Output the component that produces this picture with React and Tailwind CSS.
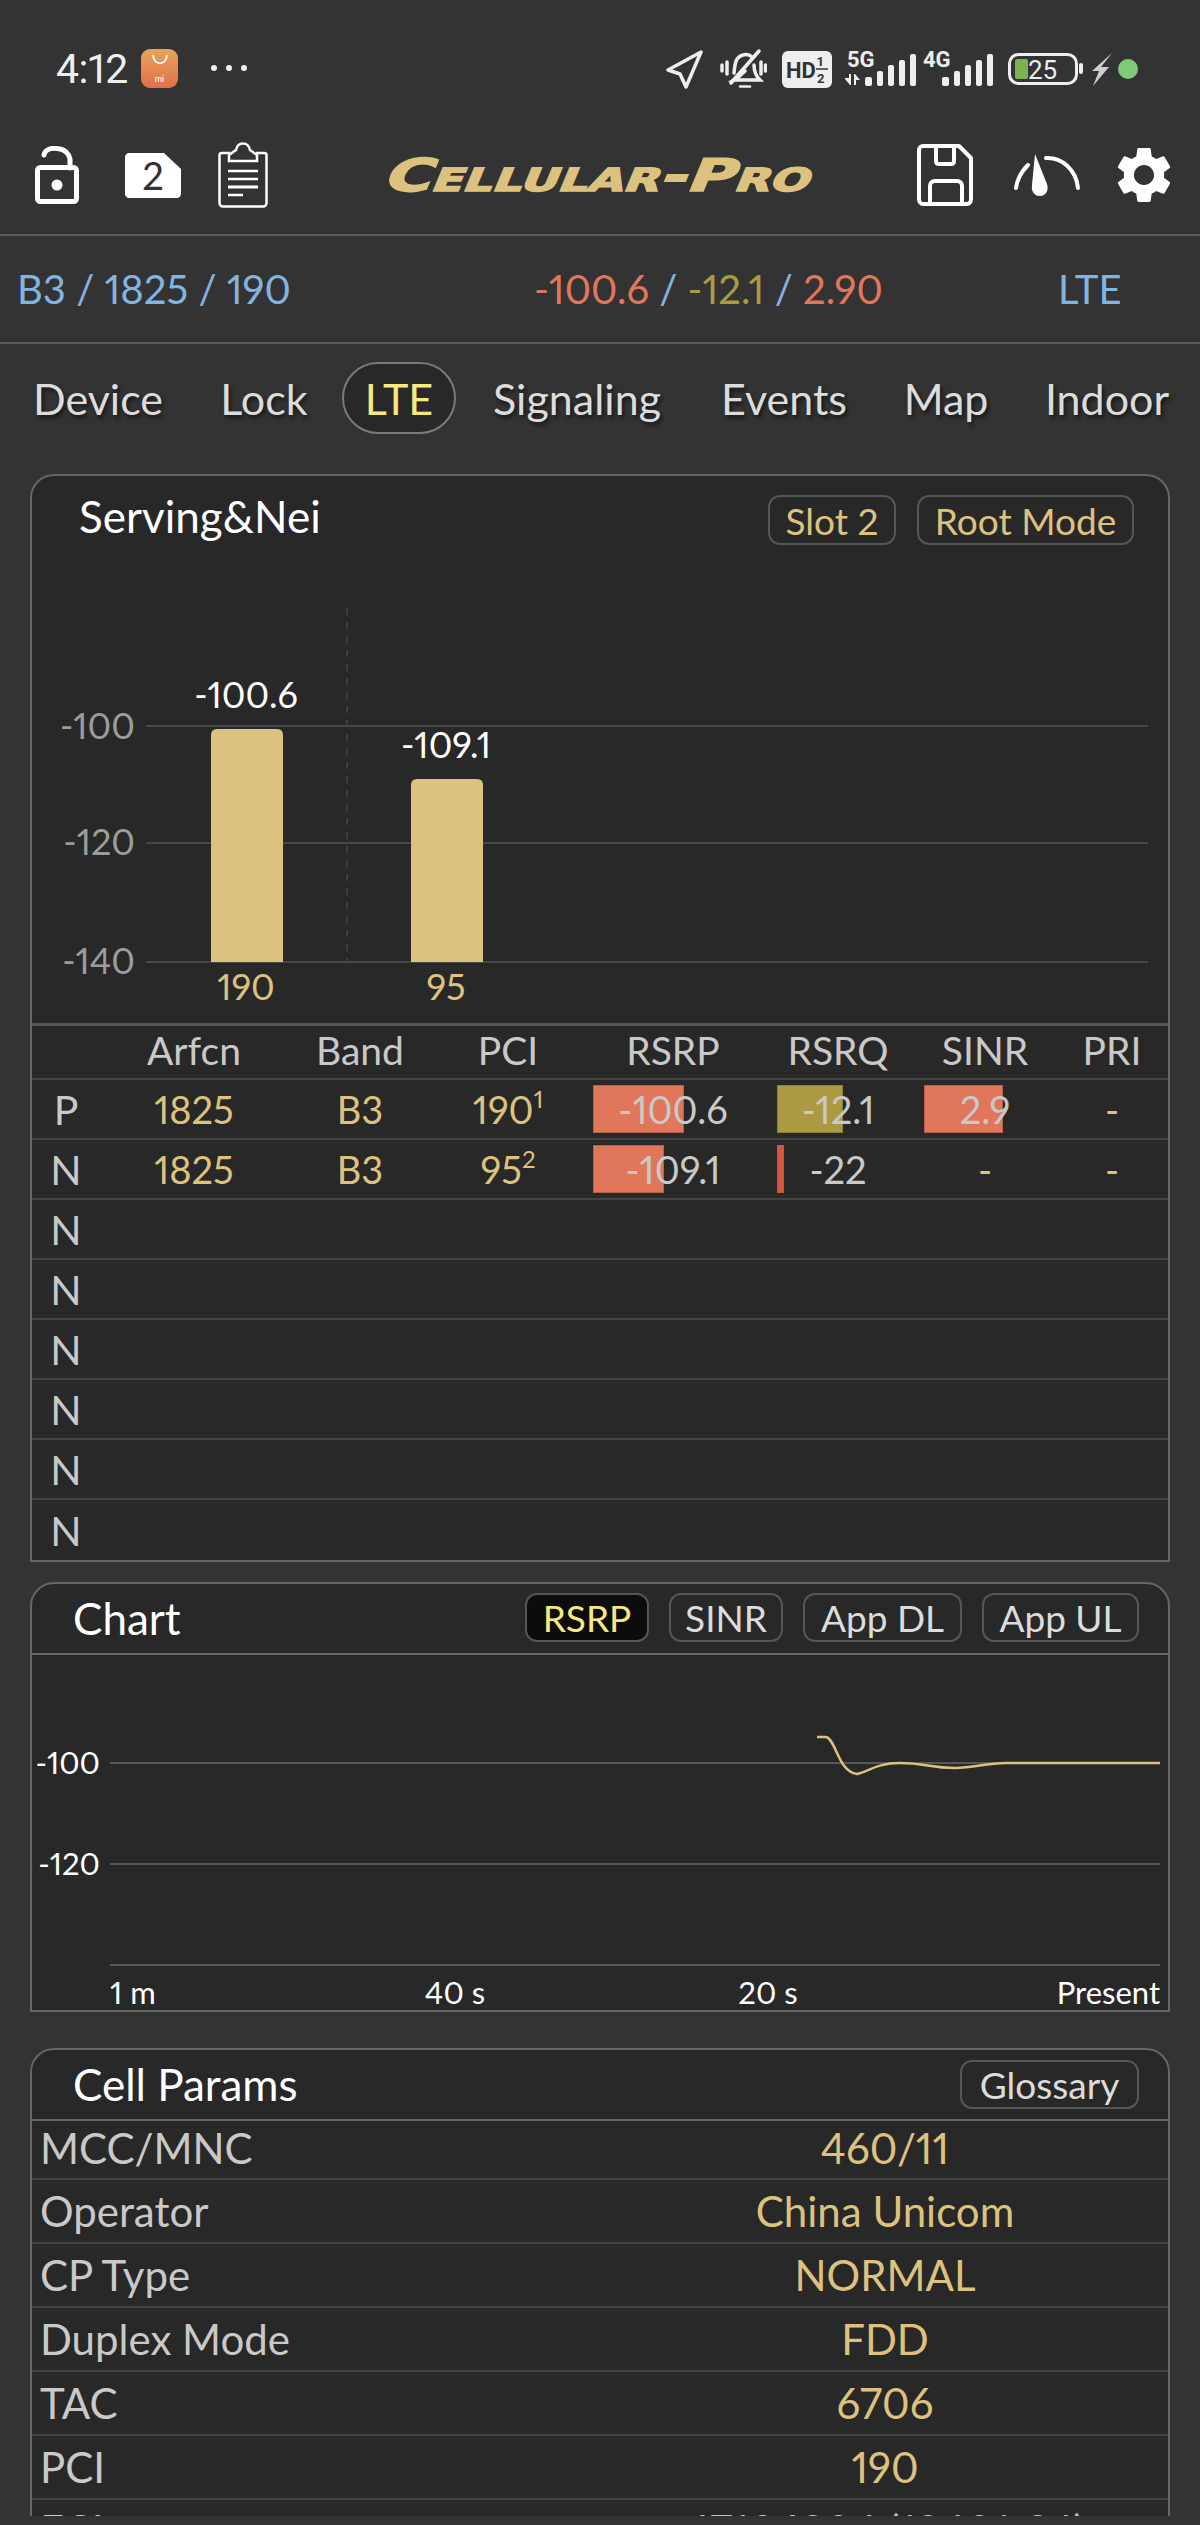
import React from "react";

const GOLD = "#ddc27f";

const NavArrow = () => (
  <svg width="38" height="40" viewBox="0 0 38 40" fill="none" stroke="#eeeeee" strokeWidth="3.5" strokeLinejoin="round">
    <path d="M36 3 L3 21 L15 25 L21 38 Z" />
  </svg>
);

const MutedBell = () => (
  <svg width="47" height="40" viewBox="0 0 47 40" fill="none" stroke="#eeeeee" strokeWidth="3.5" strokeLinecap="round">
    <path d="M14 24 C15 16 15 8 23 6 C27 5 30 6 32 8" />
    <path d="M34 16 C34 23 36 27 40 31 L14 31 C19 28 22 25 25 22" />
    <path d="M39 2 L11 34" />
    <path d="M2 16 V22 M7 13 V25 M41 13 V25 M45.500 16 V22" />
    <path d="M20 37.500 H30" strokeWidth="2.500" />
  </svg>
);

const HdChip = () => (
  <svg width="50" height="37" viewBox="0 0 50 37" className="overflow-visible">
    <rect x="0" y="0" width="50" height="37" rx="6" fill="#eeeeee" />
    <text x="4" y="27" fontSize="22" fontWeight="700" fill="#333333" fontFamily="Roboto, sans-serif">HD</text>
    <text x="35" y="15" fontSize="13" fontWeight="700" fill="#333333" fontFamily="Roboto, sans-serif">1</text>
    <path d="M34 18 H46" stroke="#333333" strokeWidth="1.500" />
    <text x="35" y="32" fontSize="13" fontWeight="700" fill="#333333" fontFamily="Roboto, sans-serif">2</text>
  </svg>
);

const Signal = ({ label, arrows }) => (
  <svg width={arrows ? 72 : 69} height="36" viewBox={arrows ? "0 0 72 36" : "0 0 69 36"} fill="#eeeeee" className="overflow-visible">
    <text x={arrows ? 2 : 0} y="16" fontSize="22" fontWeight="700" fontFamily="Roboto, sans-serif">{label}</text>
    {arrows && <path d="M0 27 H4 V23 H6 V34 H5 L0 28 Z M9 23 H10 L15 29 H11 V34 H9 Z" />}
    <g transform={arrows ? "translate(20 0)" : "translate(19 0)"}>
      <rect x="0" y="26" width="7" height="9" rx="2" />
      <rect x="12" y="20" width="6" height="15" rx="2" />
      <rect x="23" y="14" width="6" height="21" rx="2" />
      <rect x="34" y="9" width="6" height="26" rx="2" />
      <rect x="45" y="3" width="6" height="32" rx="2" />
    </g>
  </svg>
);

const Battery = () => (
  <svg width="75" height="32" viewBox="0 0 75 32" className="overflow-visible">
    <rect x="1.500" y="1.500" width="67" height="29" rx="9" fill="none" stroke="#eeeeee" strokeWidth="3" />
    <rect x="7" y="6" width="13" height="20" rx="2" fill="#7cb350" />
    <text x="20" y="26" fontSize="26" fill="#eeeeee" fontFamily="Roboto, sans-serif">25</text>
    <rect x="71" y="10" width="4" height="11" rx="2" fill="#eeeeee" />
  </svg>
);

const Bolt = () => (
  <svg width="20" height="33" viewBox="0 0 20 33" fill="#cfcfcf">
    <path d="M20 0 L9 14 H17 L1 33 L7 18 H0 Z" />
  </svg>
);

const LockIcon = () => (
  <svg width="44" height="58" viewBox="0 0 44 58" fill="none" stroke="white" strokeWidth="5">
    <path d="M9 9 C10 3 17 2 22 2.500 C30 3 34 8 35 13 V22" strokeLinecap="round" />
    <rect x="2.500" y="21.500" width="39" height="34" rx="3" />
    <circle cx="22" cy="39" r="5.500" fill="white" stroke="none" />
  </svg>
);

const SimIcon = () => (
  <svg width="56" height="45" viewBox="0 0 56 45">
    <path d="M4 0 H39 L56 16 V41 C56 43 54 45 52 45 H4 C2 45 0 43 0 41 V4 C0 2 2 0 4 0 Z" fill="white" />
    <text x="28" y="37" textAnchor="middle" fontSize="38" fill="#333333" fontFamily="Lato, sans-serif">2</text>
  </svg>
);

const ClipboardIcon = () => (
  <svg width="50" height="66" viewBox="0 0 50 66" fill="none" stroke="white" strokeWidth="2.500">
    <path d="M12 11 H4 C2 11 1.500 12 1.500 13 V61 C1.500 63 3 64.500 5 64.500 H45 C47 64.500 48.500 63 48.500 61 V13 C48.500 12 48 11 46 11 H38" />
    <path d="M11 19 V13 L18 8 C19 3 22 1.500 25 1.500 C28 1.500 31 3 32 8 L39 13 V19 Z" />
    <path d="M10 29 H40 M10 37 H40" strokeWidth="2.500" />
    <path d="M10 45 H40" strokeWidth="3" />
    <path d="M10 53 H25" strokeWidth="2.500" />
  </svg>
);

const SaveIcon = () => (
  <svg width="56" height="62" viewBox="0 0 56 62" fill="none" stroke="white" strokeWidth="4" strokeLinejoin="round">
    <path d="M6 2 H42 L54 14 V55 C54 58 52 60 50 60 H6 C4 60 2 58 2 55 V6 C2 4 4 2 6 2 Z" />
    <path d="M19 2 V17 C19 19 20 20 22 20 H34 C36 20 37 19 37 17 V2" />
    <path d="M13 60 V42 C13 39 15 37 18 37 H40 C43 37 45 39 45 42 V60" />
  </svg>
);

const GaugeIcon = () => (
  <svg width="66" height="42" viewBox="0 0 66 42" fill="none" stroke="white" strokeWidth="4" strokeLinecap="round">
    <path d="M2 34 C3 26 8 17 14 11" />
    <path d="M32 4 C47 3 62 15 64 34" />
    <path d="M21 0 L33 30 C35 36 32 42 26 42 C20 42 17 37 18 31 Z" fill="white" stroke="none" />
  </svg>
);

const GearIcon = () => (
  <svg width="56" height="56" viewBox="2 2 20 20" fill="white">
    <path d="M19.14 12.94c.04-.3.06-.61.06-.94 0-.32-.02-.64-.07-.94l2.03-1.58a.49.49 0 0 0 .12-.61l-1.92-3.32a.488.488 0 0 0-.59-.22l-2.39.96c-.5-.38-1.03-.7-1.62-.94l-.36-2.54a.484.484 0 0 0-.48-.41h-3.84c-.24 0-.43.17-.47.41l-.36 2.54c-.59.24-1.13.57-1.62.94l-2.39-.96c-.22-.08-.47 0-.59.22L2.74 8.87c-.12.21-.08.47.12.61l2.03 1.58c-.05.3-.09.63-.09.94s.02.64.07.94l-2.03 1.58a.49.49 0 0 0-.12.61l1.92 3.32c.12.22.37.29.59.22l2.39-.96c.5.38 1.03.7 1.62.94l.36 2.54c.05.24.24.41.48.41h3.84c.24 0 .44-.17.47-.41l.36-2.54c.59-.24 1.13-.56 1.62-.94l2.39.96c.22.08.47 0 .59-.22l1.92-3.32c.12-.22.07-.47-.12-.61l-2.01-1.58zM12 15.6c-1.98 0-3.6-1.62-3.6-3.6s1.62-3.6 3.6-3.6 3.6 1.62 3.6 3.6-1.62 3.6-3.6 3.6z" />
  </svg>
);

const Chip = ({ children, active, gold, className }) => (
  <div
    className={`flex items-center justify-center rounded-[12px] border-2 border-[#565656] text-[37px] leading-none ${
      active ? "bg-[#0c0c0c] text-[#f8e881]" : gold ? "text-[#ddc27f]" : "text-[#dcdcdc]"
    } ${className}`}
  >
    {children}
  </div>
);

const BarChart = () => (
  <svg width="1136" height="463" viewBox="32 560 1136 463" className="block font-['Lato']">
    <path d="M347 608 V962" stroke="#444444" strokeWidth="1.500" strokeDasharray="7 7" />
    {[726, 843, 962].map((y) => (
      <path key={y} d={`M146 ${y} H1148`} stroke="#484848" strokeWidth="2" />
    ))}
    <path d="M211 962 V735 Q211 729 217 729 H277 Q283 729 283 735 V962 Z" fill={GOLD} />
    <path d="M411 962 V785 Q411 779 417 779 H477 Q483 779 483 785 V962 Z" fill={GOLD} />
    <g fontSize="36" fill="#9c9c9c" textAnchor="end">
      <text x="135" y="739">-100</text>
      <text x="135" y="855">-120</text>
      <text x="135" y="974">-140</text>
    </g>
    <g fontSize="36" fill="white" textAnchor="middle">
      <text x="246" y="708">-100.6</text>
      <text x="446" y="758">-109.1</text>
    </g>
    <g fontSize="36" fill={GOLD} textAnchor="middle">
      <text x="246" y="1000">190</text>
      <text x="446" y="1000">95</text>
    </g>
  </svg>
);

const LineChart = () => (
  <svg width="1136" height="355" viewBox="32 1655 1136 355" className="block font-['Lato']">
    {[1763, 1864, 1965].map((y) => (
      <path key={y} d={`M110 ${y} H1160`} stroke="#585858" strokeWidth="2" />
    ))}
    <path
      d="M817 1737 H826 C836 1739 838 1772 857 1774 C868 1772 876 1763 900 1763 C925 1763 930 1768 955 1768 C975 1768 985 1763 1006 1763 H1160"
      fill="none"
      stroke={GOLD}
      strokeWidth="2.500"
    />
    <g fontSize="31" fill="white">
      <text x="100" y="1774" textAnchor="end">-100</text>
      <text x="100" y="1875" textAnchor="end">-120</text>
      <text x="110" y="2004">1 m</text>
      <text x="455" y="2004" textAnchor="middle">40 s</text>
      <text x="768" y="2004" textAnchor="middle">20 s</text>
      <text x="1160" y="2004" textAnchor="end">Present</text>
    </g>
  </svg>
);

const COLS = "grid grid-cols-[68px_188px_144px_152px_178px_152px_142px_112px] items-center";

const rows = [
  { tag: "P", arfcn: "1825", band: "B3", pci: "190", sup: "1", rsrp: "-100.6", rsrq: "-12.1", sinr: "2.9", pri: "-", rsrpBar: "w-[91px]", rsrqBar: "w-[66px] bg-[#ab9a42] border-[#8f8137]", sinrBar: "w-[79px]" },
  { tag: "N", arfcn: "1825", band: "B3", pci: "95", sup: "2", rsrp: "-109.1", rsrq: "-22", sinr: "-", pri: "-", rsrpBar: "w-[71px]", rsrqBar: "w-[7px] bg-[#d9573a] border-[#b85f48]" },
  { tag: "N" },
  { tag: "N" },
  { tag: "N" },
  { tag: "N" },
  { tag: "N" },
  { tag: "N" },
];

const params = [
  ["MCC/MNC", "460/11"],
  ["Operator", "China Unicom"],
  ["CP Type", "NORMAL"],
  ["Duplex Mode", "FDD"],
  ["TAC", "6706"],
  ["PCI", "190"],
];

const Tab = ({ children, className }) => (
  <div className={`flex h-[72px] items-center justify-center whitespace-nowrap text-[43px] leading-none text-[#dcdcdc] [text-shadow:2px_3px_4px_rgba(0,0,0,0.6)] ${className}`}>
    {children}
  </div>
);

const App = () => {
  return (
    <div className="h-[2525px] w-[1200px] overflow-hidden bg-[#333333] font-['Lato',sans-serif] proportional-nums">
      <div className="h-[2516px] overflow-hidden">
        {/* status bar */}
        <div className="flex h-[140px] items-start pt-[49px]">
          <div className="ml-[56px] w-[85px] text-[41px] leading-[40px] tracking-[-0.5px] text-[#eeeeee] font-['Roboto']">4:12</div>
          <div className="flex h-[39px] w-[37px] flex-col items-center justify-between rounded-[9px] bg-gradient-to-b from-[#e8a45c] to-[#e06f48] py-[5px]">
            <svg width="20" height="14" viewBox="0 0 20 14" fill="none" stroke="white" strokeWidth="2"><path d="M3 1 C4 12 16 12 17 1" /></svg>
            <span className="text-[9px] leading-none text-white">mi</span>
          </div>
          <div className="ml-[33px] mt-[16px] flex gap-[9px]">
            <div className="h-[6px] w-[6px] rounded-full bg-[#eeeeee]" />
            <div className="h-[6px] w-[6px] rounded-full bg-[#eeeeee]" />
            <div className="h-[6px] w-[6px] rounded-full bg-[#eeeeee]" />
          </div>
          <div className="ml-auto mr-[62px] flex items-center">
            <NavArrow />
            <div className="ml-[17px]"><MutedBell /></div>
            <div className="ml-[15px]"><HdChip /></div>
            <div className="ml-[13px]"><Signal label="5G" arrows /></div>
            <div className="ml-[6px]"><Signal label="4G" /></div>
            <div className="ml-[16px]"><Battery /></div>
            <div className="ml-[9px]"><Bolt /></div>
            <div className="ml-[6px] h-[20px] w-[20px] rounded-full bg-[#7fc97a]" />
          </div>
        </div>

        {/* toolbar */}
        <div className="flex h-[96px] items-center border-b-2 border-[#5a5a5a] pb-[24px]">
          <div className="ml-[35px]"><LockIcon /></div>
          <div className="ml-[46px]"><SimIcon /></div>
          <div className="ml-[37px]"><ClipboardIcon /></div>
          <div className="ml-[117px] inline-block w-[432px] -skew-x-[16deg] scale-x-[1.45] whitespace-nowrap text-center font-['DejaVu_Sans'] text-[45px] font-bold leading-none text-[#ddc27f] [-webkit-text-stroke:1.5px_#ddc27f] [font-variant:small-caps]">
            Cellular-Pro
          </div>
          <div className="ml-[100px]"><SaveIcon /></div>
          <div className="ml-[41px]"><GaugeIcon /></div>
          <div className="ml-[36px]"><GearIcon /></div>
        </div>

        {/* current cell */}
        <div className="flex h-[108px] items-center border-b-2 border-[#5a5a5a] pl-[17px] text-[40px] leading-none">
          <div className="w-[517px] text-[#82b4e0]">B3 / 1825 / 190</div>
          <div className="w-[524px] whitespace-nowrap">
            <span className="text-[#e0765a]">-100.6</span>
            <span className="text-[#82b4e0]"> / </span>
            <span className="text-[#ab9a42]">-12.1</span>
            <span className="text-[#82b4e0]"> / </span>
            <span className="text-[#e0765a]">2.90</span>
          </div>
          <div className="text-[#82b4e0]">LTE</div>
        </div>

        {/* tabs */}
        <div className="flex h-[130px] items-start gap-[58px] pl-[34px] pt-[18px]">
          <Tab className="w-[128px]">Device</Tab>
          <Tab className="w-[88px]">Lock</Tab>
          <div className="-mx-[24px] flex h-[72px] w-[114px] items-center justify-center rounded-[36px] border-2 border-[#7a7a7a] bg-[#282828] text-[43px] leading-none text-[#f8e881]">LTE</div>
          <Tab className="w-[174px]">Signaling</Tab>
          <Tab className="w-[124px]">Events</Tab>
          <Tab className="w-[84px]">Map</Tab>
          <Tab className="w-[122px]">Indoor</Tab>
        </div>

        {/* serving & neighbours */}
        <div className="mx-[30px] rounded-t-[24px] border-2 border-[#666666] bg-[#282828]">
          <div className="flex h-[84px] items-start">
            <div className="ml-[47px] mt-[18px] text-[44px] leading-none text-white">Serving&amp;Nei</div>
            <Chip gold className="ml-auto mt-[19px] h-[50px] w-[128px]">Slot 2</Chip>
            <Chip gold className="ml-[21px] mr-[34px] mt-[19px] h-[50px] w-[217px]">Root Mode</Chip>
          </div>
          <BarChart />
          <div className="border-t-[3px] border-[#555555]">
            <div className={`${COLS} h-[54px] border-b-2 border-[#444444] pb-[4px] text-center text-[39px] leading-none text-[#c9c9c9]`}>
              <div />
              <div>Arfcn</div>
              <div>Band</div>
              <div>PCI</div>
              <div>RSRP</div>
              <div>RSRQ</div>
              <div>SINR</div>
              <div>PRI</div>
            </div>
            {rows.map((row, i) => (
              <div key={i} className={`${COLS} h-[60px] text-center text-[38px] leading-none ${i < rows.length - 1 ? "border-b-2 border-[#444444]" : ""}`}>
                <div className="text-[41px] text-[#c9c9c9]">{row.tag}</div>
                <div className="text-[#ddc27f]">{row.arfcn}</div>
                <div className="text-[#ddc27f]">{row.band}</div>
                <div className="text-[#ddc27f]">
                  {row.pci}
                  {row.sup && <sup className="-top-[0.65em] text-[24px] leading-none">{row.sup}</sup>}
                </div>
                <div className="relative text-[#c9c9c9]">
                  {row.rsrpBar && <div className={`absolute left-[9px] top-[-5px] h-[48px] border border-[#b85f48] bg-[#e0765a] ${row.rsrpBar}`} />}
                  <span className="relative">{row.rsrp}</span>
                </div>
                <div className="relative text-[#c9c9c9]">
                  {row.rsrqBar && <div className={`absolute left-[15px] top-[-5px] h-[48px] border ${row.rsrqBar}`} />}
                  <span className="relative">{row.rsrq}</span>
                </div>
                <div className={`relative ${row.sinr === "-" ? "text-[#ddc27f]" : "text-[#c9c9c9]"}`}>
                  {row.sinrBar && <div className={`absolute left-[10px] top-[-5px] h-[48px] border border-[#b85f48] bg-[#e0765a] ${row.sinrBar}`} />}
                  <span className="relative">{row.sinr}</span>
                </div>
                <div className="text-[#ddc27f]">{row.pri}</div>
              </div>
            ))}
          </div>
        </div>

        {/* chart */}
        <div className="mx-[30px] mt-[20px] rounded-t-[24px] border-2 border-[#666666] bg-[#282828]">
          <div className="flex h-[71px] items-start border-b-2 border-[#666666]">
            <div className="ml-[41px] mt-[12px] text-[44px] leading-none text-white">Chart</div>
            <Chip active className="ml-auto mt-[9px] h-[49px] w-[124px]">RSRP</Chip>
            <Chip className="ml-[20px] mt-[9px] h-[49px] w-[114px]">SINR</Chip>
            <Chip className="ml-[20px] mt-[9px] h-[49px] w-[159px]">App DL</Chip>
            <Chip className="ml-[20px] mr-[29px] mt-[9px] h-[49px] w-[157px]">App UL</Chip>
          </div>
          <LineChart />
        </div>

        {/* cell params */}
        <div className="mx-[30px] mt-[36px] rounded-t-[24px] border-2 border-[#666666] bg-[#282828]">
          <div className="flex h-[71px] items-start border-b-2 border-[#666666]">
            <div className="ml-[41px] mt-[12px] text-[44px] leading-none text-white">Cell Params</div>
            <Chip className="ml-auto mr-[29px] mt-[10px] h-[49px] w-[179px]">Glossary</Chip>
          </div>
          {params.map(([name, value], i) => (
            <div key={name} className={`flex items-center border-b-2 border-[#444444] text-[42px] leading-none ${i === 0 ? "h-[59px] pb-[3px]" : "h-[64px]"}`}>
              <div className="w-[583px] pl-[8px] text-[#c9c9c9]">{name}</div>
              <div className="w-[540px] text-center text-[#ddc27f]">{value}</div>
            </div>
          ))}
          <div className="flex h-[60px] items-center text-[42px] leading-none">
            <div className="w-[583px] pl-[8px] text-[#c9c9c9]">ECI</div>
            <div className="w-[540px] text-center text-[#ddc27f]">47106304 (18401-24)</div>
          </div>
        </div>
      </div>
    </div>
  );
};

export default App;
